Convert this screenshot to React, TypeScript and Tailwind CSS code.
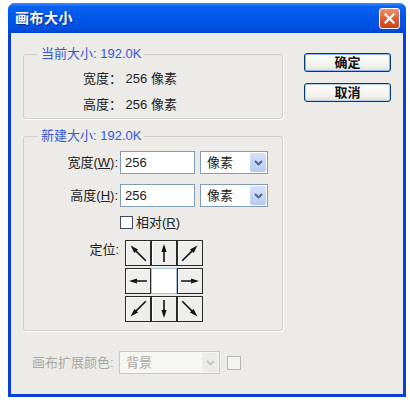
import React from 'react';

const font = "font-['Liberation_Sans','Noto_Sans_CJK_SC',sans-serif]";

function Arrow({ angle, long }: { angle: number; long?: boolean }) {
  // arrow pointing up, rotated to the wanted direction
  const y1 = long ? 23 : 21;
  const tip = long ? 1.5 : 3;
  return (
    <svg width="24" height="24" viewBox="0 0 24 24">
      <g transform={`rotate(${angle} 12 12)`}>
        <line x1="12" y1={y1} x2="12" y2={tip + 5} stroke="#111" strokeWidth="1.6" />
        <polygon points={`12,${tip} 9.4,${tip + 8} 14.6,${tip + 8}`} fill="#111" />
      </g>
    </svg>
  );
}

function Cell({ angle, center }: { angle?: number; center?: boolean }) {
  if (center) {
    return <div className="w-[26px] h-[26px] bg-white border border-[#a9c3df]" />;
  }
  return (
    <div className="w-[26px] h-[26px] border border-[#2a2a2a] bg-[#eeeeec] flex items-center justify-center shadow-[inset_1px_1px_0_#ffffff]">
      <Arrow angle={angle ?? 0} long={(angle ?? 0) % 90 !== 0} />
    </div>
  );
}

function Chevron({ color }: { color: string }) {
  return (
    <svg width="9" height="6" viewBox="0 0 9 6">
      <polyline points="1,1 4.5,4.5 8,1" fill="none" stroke={color} strokeWidth="1.8" />
    </svg>
  );
}

function Select({ value, disabled, width }: { value: string; disabled?: boolean; width: string }) {
  return (
    <div
      className={`${width} h-[23px] flex items-stretch border ${
        disabled ? 'border-[#cac8bb] bg-[#f6f6f2]' : 'border-[#7f9db9] bg-white'
      }`}
    >
      <span
        className={`flex-1 pl-[6px] flex items-center text-[13px] ${disabled ? 'text-[#a8a8a0]' : 'text-[#222]'}`}
      >
        {value}
      </span>
      <span
        className={`w-[16px] m-[1px] rounded-[2px] flex items-center justify-center ${
          disabled ? 'bg-[#ecece6]' : 'bg-[linear-gradient(180deg,#d6e2fc,#b7cbf4)]'
        }`}
      >
        <Chevron color={disabled ? '#c4c4bc' : '#4d6185'} />
      </span>
    </div>
  );
}

function XpButton({ label, isDefault }: { label: string; isDefault?: boolean }) {
  return (
    <button
      className={`w-[87px] h-[19px] rounded-[3px] border border-[#003c74] bg-[linear-gradient(180deg,#ffffff,#f2f1ea_70%,#e3e1d6)] text-[13px] font-bold text-[#111] leading-none flex items-center justify-center ${
        isDefault ? 'shadow-[inset_0_0_0_1px_#8fb4ee]' : 'shadow-[inset_0_0_0_1px_#b9cdee]'
      }`}
    >
      {label}
    </button>
  );
}

export default function App() {
  const grid: (number | null)[][] = [
    [-45, 0, 45],
    [-90, null, 90],
    [-135, 180, 135],
  ];

  return (
    <div className={`w-[410px] h-[400px] bg-white pt-[3px] pl-[8px] ${font}`}>
      <div className="w-[398px] h-[394px] rounded-t-[7px] bg-[#0a3fd9] flex flex-col overflow-hidden">
        {/* TITLE BAR */}
        <div className="h-[30px] flex items-center justify-between pl-[7px] pr-[6px] bg-[linear-gradient(180deg,#3d8dff_0%,#0a62f2_12%,#0058ea_45%,#0052e2_80%,#0045cf_100%)]">
          <span className="text-white text-[14px] font-bold tracking-[0.5px] [text-shadow:1px_1px_0_#0a2a90]">画布大小</span>
          <div className="w-[21px] h-[21px] rounded-[3px] border border-white bg-[linear-gradient(180deg,#f0906c,#e35a2e_55%,#cc4216)] flex items-center justify-center">
            <svg width="11" height="11" viewBox="0 0 11 11">
              <path d="M1.5 1.5 L9.5 9.5 M9.5 1.5 L1.5 9.5" stroke="white" strokeWidth="2.2" strokeLinecap="square" />
            </svg>
          </div>
        </div>

        {/* CLIENT */}
        <div className="flex-1 mx-[3px] mb-[3px] bg-[#ecebe8] flex pl-[12px] text-[#222]">
          <div className="w-[260px] flex flex-col pt-[13px]">
            {/* current size */}
            <fieldset className="border border-[#d0d0c4] rounded-[3px] pb-[5px] shadow-[1px_1px_0_#fff]">
              <legend className="ml-[14px] px-[3px] text-[13px] leading-[16px] text-[#3558d4]">当前大小: 192.0K</legend>
              <div className="flex flex-col gap-[10px] mt-[9px] pl-[59px] text-[13px] leading-[16px]">
                <div>宽度： 256 像素</div>
                <div>高度： 256 像素</div>
              </div>
            </fieldset>

            {/* new size */}
            <fieldset className="mt-[9px] border border-[#d0d0c4] rounded-[3px] pb-[8px] shadow-[1px_1px_0_#fff]">
              <legend className="ml-[14px] px-[3px] text-[13px] leading-[16px] text-[#3558d4]">新建大小: 192.0K</legend>
              <div className="flex items-center mt-[7px] text-[13px]">
                <span className="w-[95px] text-right pr-[1px]">
                  宽度(<span className="underline">W</span>):
                </span>
                <div className="ml-[1px] w-[75px] h-[23px] border border-[#7f9db9] bg-white pl-[4px] flex items-center">256</div>
                <div className="ml-[5px]">
                  <Select value="像素" width="w-[68px]" />
                </div>
              </div>
              <div className="flex items-center mt-[10px] text-[13px]">
                <span className="w-[95px] text-right pr-[1px]">
                  高度(<span className="underline">H</span>):
                </span>
                <div className="ml-[1px] w-[75px] h-[23px] border border-[#7f9db9] bg-white pl-[4px] flex items-center">256</div>
                <div className="ml-[5px]">
                  <Select value="像素" width="w-[68px]" />
                </div>
              </div>
              <div className="flex items-center mt-[9px] pl-[96px] text-[13px] leading-[13px]">
                <span className="w-[13px] h-[13px] border border-[#3a4a60] bg-white" />
                <span className="ml-[3px]">
                  相对(<span className="underline">R</span>)
                </span>
              </div>
              <div className="flex mt-[11px]">
                <span className="w-[95px] text-right text-[13px] leading-[16px] pt-[2px]">定位:</span>
                <div className="ml-[6px] flex flex-col gap-[2px]">
                  {grid.map((row, r) => (
                    <div key={r} className="flex">
                      {row.map((a, c) =>
                        a === null ? <Cell key={c} center /> : <Cell key={c} angle={a} />
                      )}
                    </div>
                  ))}
                </div>
              </div>
            </fieldset>

            {/* canvas extension colour */}
            <div className="flex items-center mt-[20px] text-[13px]">
              <span className="w-[96px] pl-[9px] text-[#a8a8a0]">画布扩展颜色:</span>
              <Select value="背景" width="w-[101px]" disabled />
              <span className="ml-[7px] w-[14px] h-[14px] border border-[#b8b8b0] bg-[#f4f4f0]" />
            </div>
          </div>

          {/* BUTTONS */}
          <div className="ml-[21px] pt-[20px] flex flex-col gap-[11px]">
            <XpButton label="确定" isDefault />
            <XpButton label="取消" />
          </div>
        </div>
      </div>
    </div>
  );
}
